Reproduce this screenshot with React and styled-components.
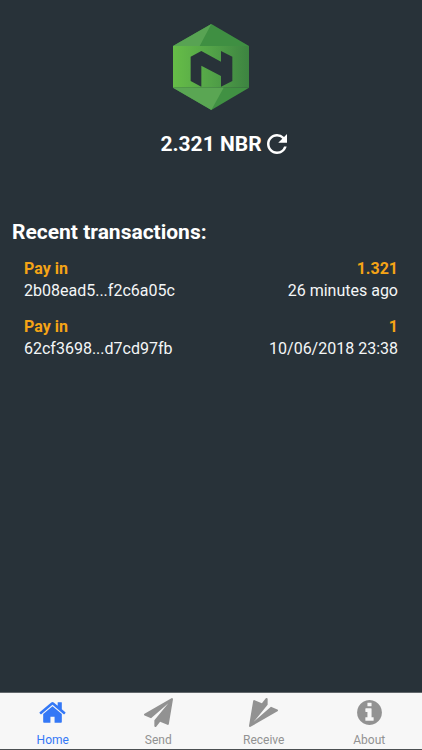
import styled, {createGlobalStyle} from 'styled-components'
import {MdRefresh} from 'react-icons/md'

const GlobalStyle = createGlobalStyle`
  html, body, #root {
    height: 100%;
  }
  body {
    margin: 0;
    background: #283239;
    font-family: Roboto, sans-serif;
  }
`

const Screen = styled.div`
  display: flex;
  flex-direction: column;
  min-height: 100%;
  color: #fff;
`

const Content = styled.main`
  flex: 1;
  padding: 24px 12px;
`

const Header = styled.header`
  display: flex;
  flex-direction: column;
  align-items: center;
  gap: 19px;
`

const Balance = styled.div`
  display: grid;
  grid-template-columns: 1fr auto 1fr;
  align-items: center;
  width: 100%;
  font-size: 21px;
  line-height: 28px;
  font-weight: bold;
`

const Amount = styled.span`
  grid-column: 2;
`

const RefreshButton = styled.button`
  display: flex;
  justify-self: start;
  padding: 0;
  border: 0;
  background: none;
  color: inherit;
  cursor: pointer;
`

const Title = styled.h1`
  margin: 59px 0 12px;
  font-size: 21px;
  line-height: 28px;
`

const Transactions = styled.ul`
  display: flex;
  flex-direction: column;
  gap: 14px;
  margin: 0;
  padding: 0 12px;
  list-style: none;
`

const Row = styled.div`
  display: flex;
  justify-content: space-between;
  font-size: 16px;
  line-height: 22px;
  color: ${props => props.$highlight ? '#f5a416' : '#f4f6f7'};
  font-weight: ${props => props.$highlight ? 'bold' : 'normal'};
`

const TabBar = styled.nav`
  display: flex;
  background: #f7f7f7;
  border-top: 1px solid #62686c;
  border-bottom: 1px solid #4b4f52;
`

const Tab = styled.a`
  display: flex;
  flex: 1;
  flex-direction: column;
  align-items: center;
  gap: 5px;
  padding: 5px 0 1px;
  font-size: 12px;
  line-height: 16px;
  text-decoration: none;
  color: ${props => props.$active ? '#3478f6' : '#929292'};
`

const TabIcon = styled.svg`
  width: 29px;
  height: 29px;
  fill: currentColor;
  transform: ${props => props.$flipped ? 'rotate(180deg)' : 'none'};
`

const plane = 'M1764 11q33 24 27 64l-256 1536q-5 29-32 45-14 8-31 8-11 0-24-5l-453-185-242 295q-18 23-49 23-13 0-22-4-19-7-30.5-23.5t-11.5-36.5v-349l864-1059-1069 925-395-162q-37-14-40-55-2-40 32-59l1664-960q15-9 32-9 20 0 36 11z'

const tabs = [
  {
    label: 'Home',
    active: true,
    path: 'M1472 992v480q0 26-19 45t-45 19h-384v-384h-256v384h-384q-26 0-45-19t-19-45v-480q0-1 .5-3t.5-3l575-474 575 474q1 2 1 6zm223-69l-62 74q-8 9-21 11h-3q-13 0-21-7l-692-577-692 577q-12 8-24 7-13-2-21-11l-62-74q-8-10-7-23.5t11-21.5l719-599q32-26 76-26t76 26l244 204v-195q0-14 9-23t23-9h192q14 0 23 9t9 23v408l219 182q10 8 11 21.5t-7 23.5z'
  },
  {label: 'Send', path: plane},
  {label: 'Receive', path: plane, flipped: true},
  {
    label: 'About',
    path: 'M1152 1376v-160q0-14-9-23t-23-9h-96v-512q0-14-9-23t-23-9h-320q-14 0-23 9t-9 23v160q0 14 9 23t23 9h96v320h-96q-14 0-23 9t-9 23v160q0 14 9 23t23 9h448q14 0 23-9t9-23zm-128-896v-160q0-14-9-23t-23-9h-192q-14 0-23 9t-9 23v160q0 14 9 23t23 9h192q14 0 23-9t9-23zm640 416q0 209-103 385.5t-279.5 279.5-385.5 103-385.5-103-279.5-279.5-103-385.5 103-385.5 279.5-279.5 385.5-103 385.5 103 279.5 279.5 103 385.5z'
  }
]

const transactions = [
  {type: 'Pay in', amount: '1.321', id: '2b08ead5...f2c6a05c', date: '26 minutes ago'},
  {type: 'Pay in', amount: '1', id: '62cf3698...d7cd97fb', date: '10/06/2018 23:38'}
]

const Logo = () => (
  <svg width='76' height='86' viewBox='0 0 228 258' role='img' aria-label='NBR'>
    <defs>
      <linearGradient id='band'>
        <stop offset='0' stopColor='#66bd47' />
        <stop offset='0.5' stopColor='#53a348' />
        <stop offset='1' stopColor='#3d8441' />
      </linearGradient>
    </defs>
    <path fill='#3f8f42' d='M115 0L228 66H0z' />
    <path fill='#58a353' d='M115 0L0 66H80z' />
    <path fill='url(#band)' d='M0 66H228V191H0z' />
    <path fill='#419143' d='M228 191H0L115 258z' />
    <path fill='#5aa653' d='M0 191H152L115 258z' />
    <path fill='#283239' d='M53 98L85 81L144 113V81L178 98V171L144 188V156L85 125V188L53 171z' />
  </svg>
)

export default function App () {
  return (
    <Screen>
      <GlobalStyle />
      <Content>
        <Header>
          <Logo />
          <Balance>
            <Amount>2.321 NBR</Amount>
            <RefreshButton aria-label='Refresh'><MdRefresh size={30} /></RefreshButton>
          </Balance>
        </Header>
        <Title>Recent transactions:</Title>
        <Transactions>
          {transactions.map(tx => (
            <li key={tx.id}>
              <Row $highlight><span>{tx.type}</span><span>{tx.amount}</span></Row>
              <Row><span>{tx.id}</span><span>{tx.date}</span></Row>
            </li>
          ))}
        </Transactions>
      </Content>
      <TabBar>
        {tabs.map(tab => (
          <Tab key={tab.label} href={`#${tab.label.toLowerCase()}`} $active={tab.active}>
            <TabIcon viewBox='0 0 1792 1792' $flipped={tab.flipped} aria-hidden='true'>
              <path d={tab.path} />
            </TabIcon>
            {tab.label}
          </Tab>
        ))}
      </TabBar>
    </Screen>
  )
}
